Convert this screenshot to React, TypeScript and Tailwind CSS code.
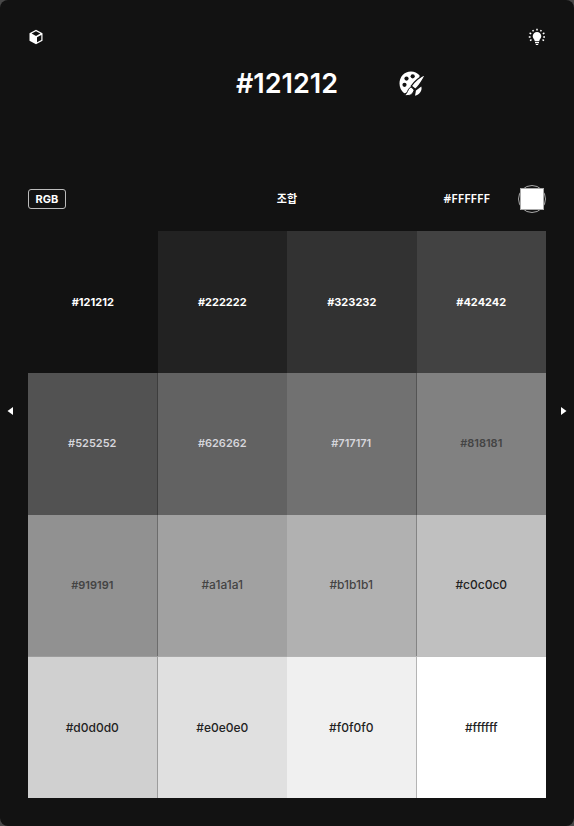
const swatches = [
  { hex: "#121212", fill: "bg-[#121212]", text: "text-white font-bold", size: "text-[11px]" },
  { hex: "#222222", fill: "bg-[#222222]", text: "text-white font-bold", size: "text-[11px]" },
  { hex: "#323232", fill: "bg-[#323232]", text: "text-white font-bold", size: "text-[11px]" },
  { hex: "#424242", fill: "bg-[#424242]", text: "text-white font-bold", size: "text-[11px]" },
  { hex: "#525252", fill: "bg-[#525252]", text: "text-[#d6d6dc] font-semibold", size: "text-[11px]" },
  { hex: "#626262", fill: "bg-[#626262]", text: "text-[#d6d6dc] font-semibold", size: "text-[11px]" },
  { hex: "#717171", fill: "bg-[#717171]", text: "text-[#d6d6dc] font-semibold", size: "text-[11px]" },
  { hex: "#818181", fill: "bg-[#818181]", text: "text-[#444444] font-semibold", size: "text-[11px]" },
  { hex: "#919191", fill: "bg-[#919191]", text: "text-[#444444] font-semibold", size: "text-[11px]" },
  { hex: "#a1a1a1", fill: "bg-[#a1a1a1]", text: "text-[#444444] font-medium", size: "text-xs" },
  { hex: "#b1b1b1", fill: "bg-[#b1b1b1]", text: "text-[#444444] font-medium", size: "text-xs" },
  { hex: "#c0c0c0", fill: "bg-[#c0c0c0]", text: "text-[#222222] font-medium", size: "text-xs" },
  { hex: "#d0d0d0", fill: "bg-[#d0d0d0]", text: "text-[#222222] font-medium", size: "text-xs" },
  { hex: "#e0e0e0", fill: "bg-[#e0e0e0]", text: "text-[#222222] font-medium", size: "text-xs" },
  { hex: "#f0f0f0", fill: "bg-[#f0f0f0]", text: "text-[#222222] font-medium", size: "text-xs" },
  { hex: "#ffffff", fill: "bg-white", text: "text-[#222222] font-medium", size: "text-xs" },
];

function CubeIcon() {
  return (
    <svg className="h-4 w-4" viewBox="0 0 16 16" aria-hidden="true">
      <path d="M8 .8 14.500 4.200v7.600L8 15.300 1.500 11.800V4.200z" fill="white" />
      <path d="M8 2.300 12.400 4.600 8 7 3.600 4.600z" fill="#121212" />
      <path d="M9 8.300 13.300 6v5L9 13.300z" fill="#121212" />
    </svg>
  );
}

function BulbIcon() {
  return (
    <svg className="h-[18px] w-[18px]" viewBox="0 0 18 18" aria-hidden="true">
      <path d="M9 4a4.300 4.300 0 0 1 4.300 4.300c0 2-1.800 2.700-2.100 5H6.800c-.3-2.300-2.100-3-2.100-5A4.300 4.300 0 0 1 9 4z" fill="white" />
      <path d="M7 14.600h4M7.800 16.500h2.400" stroke="white" strokeWidth="1.200" />
      <path d="M9 .8v1.600M4.700 2l.8 1.400M13.300 2l-.8 1.400M1.600 5l1.600.8M16.400 5l-1.600.8M.8 8.900h1.800M15.200 8.900H17M2 12.600l1.500-.9M16 12.600l-1.500-.9" stroke="white" strokeWidth="1.500" />
    </svg>
  );
}

function PaletteIcon() {
  return (
    <svg className="h-7 w-7" viewBox="0 0 28 28" aria-hidden="true">
      <path d="M21.500 5.300A12 12 0 0 0 13 1.500C6.200 1.500 1.500 7 1.500 13.600c0 4 1.700 7.300 4.700 9.600 3.500-.1 4.400-1.700 5.600-4.200l9.700-10.500z" fill="white" />
      <circle cx="14.700" cy="6.300" r="2.100" fill="#121212" />
      <circle cx="8.500" cy="8.600" r="2.100" fill="#121212" />
      <circle cx="6.500" cy="14.800" r="2.100" fill="#121212" />
      <path d="M26.500 4.800c.7.700-.3 2.400-1.300 4.100-2.200 3.800-4.900 7.800-7.800 10.400l-4.200-3.200C16 12 22.800 5.900 26.500 4.800z" fill="white" stroke="#121212" strokeWidth="1.200" />
      <path d="M12.300 17.300c1.900.1 3.400 1.400 3.700 3.200-1.600 4.200-4.400 6-9.400 4.500 3.100-1.500 2.700-5.500 5.700-7.700z" fill="white" stroke="#121212" strokeWidth="1" />
      <path d="M23.300 16.500c1.200 4.100-1.900 8.400-6.300 9.300l1-5.300z" fill="white" />
    </svg>
  );
}

export default function App() {
  return (
    <div className="min-h-screen bg-[#484848]">
      <main className="flex min-h-screen flex-col rounded-lg bg-[#121212] pb-7 font-['Inter','Noto_Sans_CJK_KR',sans-serif] text-white">
        <header className="flex h-[58px] items-center justify-between px-7 pt-4">
          <button type="button" aria-label="Color model">
            <CubeIcon />
          </button>
          <button type="button" aria-label="Theme">
            <BulbIcon />
          </button>
        </header>

        <section className="grid h-[126px] grid-cols-[1fr_auto_1fr] items-start px-7 pt-2">
          <h1 className="col-start-2 text-[27px] leading-9 font-semibold">#121212</h1>
          <button type="button" aria-label="Palette" className="ml-15 w-7 pt-1">
            <PaletteIcon />
          </button>
        </section>

        <section className="mx-7 grid h-[30px] grid-cols-3 items-center">
          <button
            type="button"
            className="h-5 w-[38px] rounded-[3px] border border-[#bcbcbc] text-[11px] leading-4 font-bold"
          >
            RGB
          </button>
          <h2 className="text-center text-[11px] font-bold">조합</h2>
          <div className="flex items-center justify-end gap-7">
            <span className="font-['Noto_Sans',sans-serif] text-xs font-semibold">#FFFFFF</span>
            <button
              type="button"
              aria-label="Text color #FFFFFF"
              className="flex h-7 w-7 items-center justify-center rounded-full border border-[#aaaaaa]"
            >
              <span className="h-[22px] w-6 shrink-0 border border-[#aaaaaa] bg-white" />
            </button>
          </div>
        </section>

        <section className="mt-[17px] flex flex-1">
          <button type="button" aria-label="Previous" className="flex w-7 items-center pl-[7px]">
            <svg className="mb-52 h-2 w-1.5" viewBox="0 0 6 8" aria-hidden="true">
              <path d="M6 0v8L0.500 4z" fill="white" />
            </svg>
          </button>
          <ul className="grid flex-1 grid-cols-4 grid-rows-4">
            {swatches.map((s, i) => (
              <li
                key={s.hex}
                className={`flex border-black/25 ${s.fill} ${i > 3 && i % 2 === 0 ? "border-r" : ""} ${
                  i > 11 ? "border-t" : ""
                }`}
              >
                <button type="button" className={`flex-1 ${s.text} ${s.size}`}>
                  {s.hex}
                </button>
              </li>
            ))}
          </ul>
          <button type="button" aria-label="Next" className="flex w-7 items-center justify-end pr-[7px]">
            <svg className="mb-52 h-2 w-1.5" viewBox="0 0 6 8" aria-hidden="true">
              <path d="M0 0v8l5.500-4z" fill="white" />
            </svg>
          </button>
        </section>
      </main>
    </div>
  );
}
